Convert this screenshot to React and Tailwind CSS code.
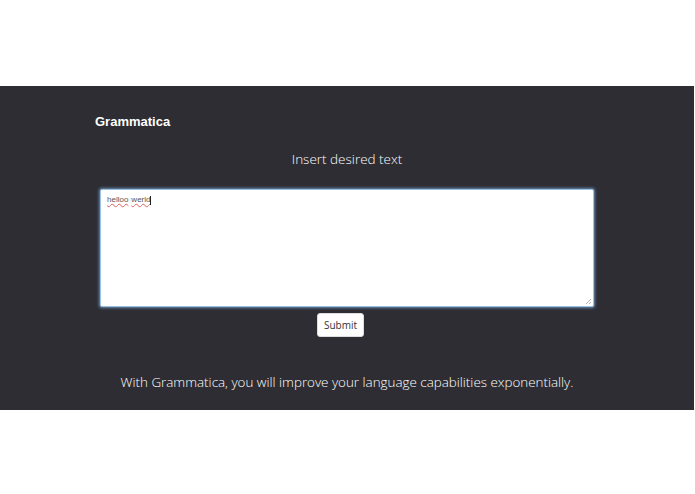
import React from 'react';

const App = () => {
  return (
    <div className="w-[695px] h-[494px] bg-white overflow-hidden font-['Open_Sans',sans-serif]">
      <div className="h-[86px]" />

      {/* Main panel */}
      <section className="h-[324px] w-[694px] bg-[#2e2d33] flex flex-col">
        <header className="pl-[95px] pt-[27px] h-[52px]">
          <h1 className="text-[13px] leading-[18px] font-bold text-white font-['Liberation_Sans',sans-serif]">
            Grammatica
          </h1>
        </header>

        <h2 className="text-center text-[13.5px] leading-[20px] font-light text-white mt-[11px]">
          Insert desired text
        </h2>

        <div className="mt-[20px] mx-auto w-[494px]">
          <div className="relative h-[118px] bg-white rounded-[2px] border border-[#9cc3e6] shadow-[0_0_3px_1px_rgba(130,180,230,0.7)]">
            <div className="pl-[6px] pt-[4px] text-[8px] leading-[12px] text-[#555] font-['Liberation_Sans',sans-serif] flex items-center">
              <span className="underline decoration-wavy decoration-[#e06060] decoration-[0.5px] underline-offset-[1px]">helloo</span>
              <span className="w-[3px]" />
              <span className="underline decoration-wavy decoration-[#e06060] decoration-[0.5px] underline-offset-[1px]">werld</span>
              <span className="w-px h-[9px] bg-[#222]" />
            </div>
            <svg className="absolute right-[1px] bottom-[1px]" width="7" height="7" viewBox="0 0 7 7">
              <path d="M6 1L1 6M6 4L4 6" stroke="#a0a0a0" strokeWidth="0.8" />
            </svg>
          </div>

          <button className="mt-[6px] ml-[217px] w-[47px] h-[24px] bg-white rounded-[3px] border border-[#ddd] text-[10px] text-[#333] flex items-center justify-center">
            Submit
          </button>
        </div>

        <p className="mt-[35px] text-center text-[13.4px] leading-[20px] font-light text-white">
          With Grammatica, you will improve your language capabilities exponentially.
        </p>
      </section>
    </div>
  );
};

export default App;
